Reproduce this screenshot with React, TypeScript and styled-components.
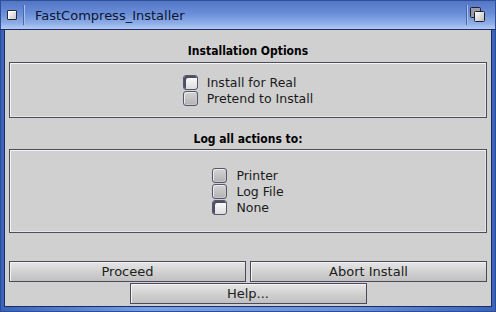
import React from 'react';
import styled, { createGlobalStyle } from 'styled-components';

const GlobalStyle = createGlobalStyle`
  html, body {
    margin: 0;
    padding: 0;
    background: #d0d0d0;
  }
  body {
    font-family: 'DejaVu Sans', 'Liberation Sans', sans-serif;
  }
`;

const WindowBlock = styled.div`
  display: flex;
  flex-direction: column;
  width: 496px;
  height: 312px;
  overflow: hidden;
`;

const TitleBar = styled.div`
  display: flex;
  align-items: center;
  height: 30px;
  box-sizing: border-box;
  border-top: 1px solid #2f4f98;
  border-bottom: 1px solid #1c2c64;
  background: linear-gradient(#5276c6 0%, #6a8ed8 45%, #8eaee8 80%, #b4cbf4 100%);
  box-shadow: inset 1px 0 #2f4f98, inset -1px 0 #2f4f98;
`;

const Gadget = styled.div`
  display: flex;
  align-items: center;
  justify-content: center;
  height: 100%;
  padding: 0 6px 0 7px;
`;

const CloseBox = styled.div`
  width: 8px;
  height: 8px;
  border: 1px solid #2a2a3a;
  border-radius: 1px;
  background: linear-gradient(135deg, #ffffff, #c8c8c8);
  box-shadow: inset 1px 1px #ffffff;
`;

const Divider = styled.div`
  width: 1px;
  height: 20px;
  background: #4a68ac;
  box-shadow: 1px 0 #a8c0ec;
`;

const TitleText = styled.div`
  flex: 1;
  padding-left: 11px;
  font-size: 13px;
  color: #0c1430;
  white-space: nowrap;
`;

const DepthGadget = styled.div`
  display: flex;
  align-items: center;
  height: 100%;
  padding: 0 10px 0 3px;
`;

const Frame = styled.div`
  display: flex;
  flex: 1;
  padding: 0 4px 5px 4px;
  background: linear-gradient(90deg, #3a62b8, #76a0e8 30%, #6a92dc 70%, #3a62b8);
  box-shadow: inset 1px 0 #2c4c9c, inset -1px 0 #2c4c9c, inset 0 -1px #2c4c9c;
`;

const Content = styled.div`
  display: flex;
  flex-direction: column;
  flex: 1;
  padding: 14px 4px 1px 4px;
  border: 1px solid #1c2c64;
  border-top: none;
  background: #d0d0d0;
`;

const Heading = styled.div<{ $gap: number }>`
  height: 15px;
  line-height: 15px;
  margin-bottom: ${({ $gap }) => $gap}px;
  text-align: center;
  font-size: 12px;
  font-stretch: condensed;
  font-weight: 700;
  color: #000;
`;

const GroupBox = styled.div<{ $height: number }>`
  display: flex;
  align-items: center;
  justify-content: center;
  height: ${({ $height }) => $height}px;
  box-sizing: border-box;
  border: 1px solid #4c4c5e;
  box-shadow: inset 1px 1px #f4f4f4, inset -1px -1px #e4e4e4;
  margin-bottom: 14px;

  &:last-of-type {
    margin-bottom: 0;
  }
`;

const OptionList = styled.div`
  display: flex;
  flex-direction: column;
`;

const OptionRow = styled.div`
  display: flex;
  align-items: center;
  height: 16px;
  font-size: 12.5px;
  color: #1a1a1a;
`;

const CheckBox = styled.span<{ $checked?: boolean }>`
  width: 15px;
  height: 15px;
  box-sizing: border-box;
  margin-right: 9px;
  border: 1px solid #55556c;
  border-radius: 3px;
  background: ${({ $checked }) =>
    $checked
      ? 'linear-gradient(#ffffff, #dcdcdc)'
      : 'linear-gradient(#d4d4d4, #b2b2b2)'};
  box-shadow: ${({ $checked }) =>
    $checked
      ? 'inset 2px 2px #4e4e62'
      : 'inset 1px 1px #ececec, inset -1px -1px #c8c8c8'};
`;

const Spacer = styled.div`
  flex: 1;
`;

const ButtonRow = styled.div`
  display: flex;
  justify-content: center;
  gap: 4px;
  margin-bottom: 1px;
`;

const Button = styled.button`
  width: 237px;
  height: 21px;
  padding: 0;
  border: 1px solid #4a4a5c;
  background: linear-gradient(#e6e6e6, #d2d2d2 50%, #c0c0c0);
  box-shadow: inset 1px 1px #f4f4f4;
  font-family: 'DejaVu Sans', 'Liberation Sans', sans-serif;
  font-size: 13px;
  color: #202020;
  cursor: pointer;
`;

function DepthIcon() {
  return (
    <svg width="16" height="16" viewBox="0 0 16 16">
      <defs>
        <linearGradient id="dg" x1="0" y1="0" x2="1" y2="1">
          <stop offset="0" stopColor="#ffffff" />
          <stop offset="1" stopColor="#bcbcbc" />
        </linearGradient>
      </defs>
      <rect x="0.5" y="0.5" width="10" height="10" rx="1" fill="#9a9aa8" stroke="#1e1e2c" />
      <rect x="4.5" y="4.5" width="10" height="10" rx="1" fill="url(#dg)" stroke="#1e1e2c" />
    </svg>
  );
}

const installOptions = [
  { label: 'Install for Real', checked: true },
  { label: 'Pretend to Install', checked: false },
];

const logOptions = [
  { label: 'Printer', checked: false },
  { label: 'Log File', checked: false },
  { label: 'None', checked: true },
];

export default function App() {
  return (
    <>
      <GlobalStyle />
      <WindowBlock>
        <TitleBar>
          <Gadget>
            <CloseBox />
          </Gadget>
          <Divider />
          <TitleText>FastCompress_Installer</TitleText>
          <Divider />
          <DepthGadget>
            <DepthIcon />
          </DepthGadget>
        </TitleBar>
        <Frame>
          <Content>
            <Heading $gap={3}>Installation Options</Heading>
            <GroupBox $height={56}>
              <OptionList>
                {installOptions.map((o) => (
                  <OptionRow key={o.label}>
                    <CheckBox $checked={o.checked} />
                    {o.label}
                  </OptionRow>
                ))}
              </OptionList>
            </GroupBox>
            <Heading $gap={2}>Log all actions to:</Heading>
            <GroupBox $height={84}>
              <OptionList>
                {logOptions.map((o) => (
                  <OptionRow key={o.label}>
                    <CheckBox $checked={o.checked} />
                    {o.label}
                  </OptionRow>
                ))}
              </OptionList>
            </GroupBox>
            <Spacer />
            <ButtonRow>
              <Button>Proceed</Button>
              <Button>Abort Install</Button>
            </ButtonRow>
            <ButtonRow>
              <Button>Help...</Button>
            </ButtonRow>
          </Content>
        </Frame>
      </WindowBlock>
    </>
  );
}
